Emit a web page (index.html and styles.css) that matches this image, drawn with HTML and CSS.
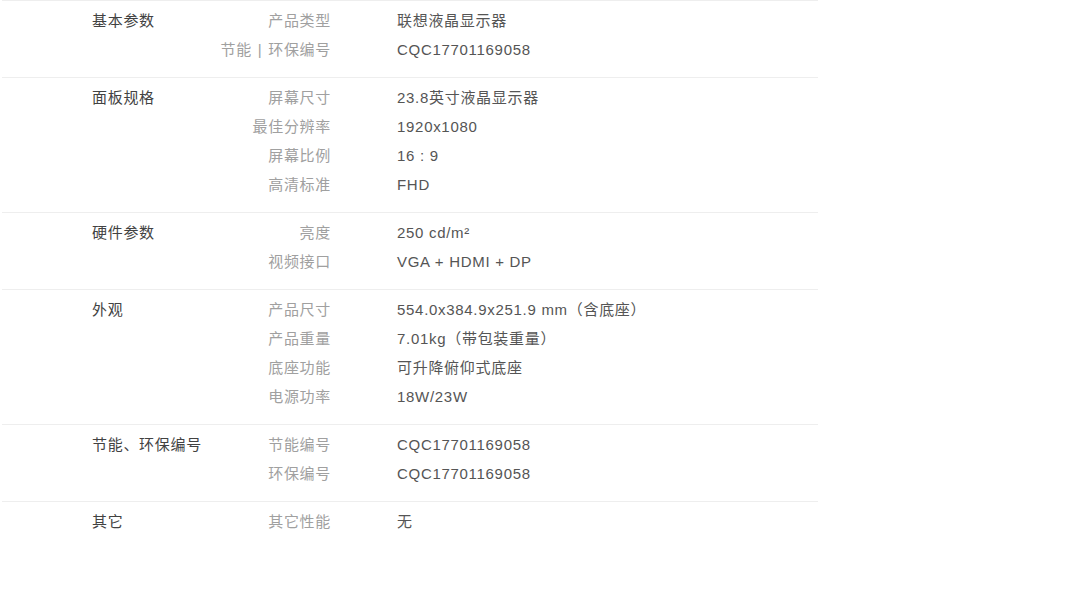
FILE: index.html
```html
<!DOCTYPE html>
<html lang="zh-CN">
<head>
    <meta charset="UTF-8">
    <meta name="viewport" content="width=device-width, initial-scale=1.0">
    <title>规格参数</title>
    <link rel="stylesheet" href="styles.css">
</head>
<body>
    <div class="spec-table">
        <div class="group">
            <div class="group-title">基本参数</div>
            <dl class="specs">
                <div class="spec"><dt>产品类型</dt><dd>联想液晶显示器</dd></div>
                <div class="spec"><dt>节能 <span class="sep">|</span> 环保编号</dt><dd>CQC17701169058</dd></div>
            </dl>
        </div>

        <div class="group">
            <div class="group-title">面板规格</div>
            <dl class="specs">
                <div class="spec"><dt>屏幕尺寸</dt><dd>23.8英寸液晶显示器</dd></div>
                <div class="spec"><dt>最佳分辨率</dt><dd>1920x1080</dd></div>
                <div class="spec"><dt>屏幕比例</dt><dd>16 : 9</dd></div>
                <div class="spec"><dt>高清标准</dt><dd>FHD</dd></div>
            </dl>
        </div>

        <div class="group">
            <div class="group-title">硬件参数</div>
            <dl class="specs">
                <div class="spec"><dt>亮度</dt><dd>250 cd/m²</dd></div>
                <div class="spec"><dt>视频接口</dt><dd>VGA + HDMI + DP</dd></div>
            </dl>
        </div>

        <div class="group">
            <div class="group-title">外观</div>
            <dl class="specs">
                <div class="spec"><dt>产品尺寸</dt><dd>554.0x384.9x251.9 mm（含底座）</dd></div>
                <div class="spec"><dt>产品重量</dt><dd>7.01kg（带包装重量）</dd></div>
                <div class="spec"><dt>底座功能</dt><dd>可升降俯仰式底座</dd></div>
                <div class="spec"><dt>电源功率</dt><dd>18W/23W</dd></div>
            </dl>
        </div>

        <div class="group">
            <div class="group-title">节能、环保编号</div>
            <dl class="specs">
                <div class="spec"><dt>节能编号</dt><dd>CQC17701169058</dd></div>
                <div class="spec"><dt>环保编号</dt><dd>CQC17701169058</dd></div>
            </dl>
        </div>

        <div class="group">
            <div class="group-title">其它</div>
            <dl class="specs">
                <div class="spec"><dt>其它性能</dt><dd>无</dd></div>
            </dl>
        </div>
    </div>
</body>
</html>
```

FILE: styles.css
```css
body {
    margin: 0;
    background: #fff;
    font-family: "Liberation Sans", Arial, "Noto Sans CJK SC", sans-serif;
    font-size: 15px;
    letter-spacing: 0.7px;
}

.spec-table {
    width: 816px;
    margin-left: 2px;
}

.group {
    display: flex;
    padding: 5px 0 13px 90px;
    border-top: 1px solid #eee;
    line-height: 29px;
}

.group-title {
    width: 120px;
    color: #424242;
}

.specs {
    margin: 0;
}

.spec {
    display: flex;
}

.spec dt {
    width: 119px;
    text-align: right;
    color: #a0a0a0;
}

.spec dt .sep {
    margin: 0 1px;
}

.spec dd {
    margin: 0 0 0 66px;
    color: #555;
}
```
